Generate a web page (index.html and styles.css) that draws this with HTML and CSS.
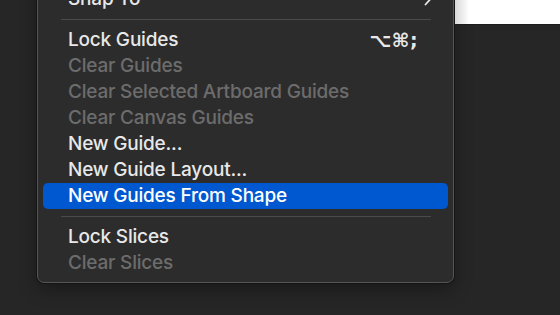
FILE: index.html
```html
<!DOCTYPE html>
<html>
<head>
<meta charset="utf-8">
<link rel="stylesheet" href="styles.css">
</head>
<body>
<div class="screen">
  <div class="menu">
    <div class="item">
      <span class="label">Snap To</span>
      <svg class="chev" width="8" height="14" viewBox="0 0 8 14"><path d="M1.5 1.5 L6.5 7 L1.5 12.5" fill="none" stroke="#e6e6e6" stroke-width="1.8" stroke-linecap="round" stroke-linejoin="round"/></svg>
    </div>
    <div class="sep"></div>
    <div class="item"><span class="label">Lock Guides</span><span class="key">⌥⌘;</span></div>
    <div class="item off"><span class="label">Clear Guides</span></div>
    <div class="item off"><span class="label">Clear Selected Artboard Guides</span></div>
    <div class="item off"><span class="label">Clear Canvas Guides</span></div>
    <div class="item"><span class="label">New Guide...</span></div>
    <div class="item"><span class="label">New Guide Layout...</span></div>
    <div class="item hi"><span class="label">New Guides From Shape</span></div>
    <div class="sep"></div>
    <div class="item"><span class="label">Lock Slices</span></div>
    <div class="item off"><span class="label">Clear Slices</span></div>
  </div>
  <div class="side">
    <div class="window"></div>
  </div>
</div>
</body>
</html>
```
FILE: styles.css
```css
html, body {
  margin: 0;
  padding: 0;
  background: #262626;
}
.screen {
  display: flex;
  width: 560px;
  height: 315px;
  overflow: hidden;
  align-items: flex-start;
}
.menu {
  box-sizing: border-box;
  margin-left: 37px;
  margin-top: -21px;
  width: 417px;
  flex: none;
  background: #2c2c2c;
  border: 1px solid #555555;
  border-radius: 7px;
  box-shadow: 0 0 0 1px #141414, 0 6px 18px rgba(0,0,0,0.35);
  padding: 6px 5px 6px 5px;
  font-family: Inter, "DejaVu Sans", sans-serif;
  font-size: 19px;
  font-weight: 500;
  letter-spacing: -0.2px;
  color: #e8e8e8;
}
.item {
  height: 26px;
  display: flex;
  align-items: center;
  justify-content: space-between;
  padding: 0 30px 0 25px;
  border-radius: 5px;
  line-height: 26px;
}
.item.off {
  color: #6c6c6c;
}
.item.hi {
  background: #0058d0;
  color: #ffffff;
}
.key {
  font-family: "DejaVu Sans", sans-serif;
  font-size: 19px;
  font-weight: 700;
  letter-spacing: 0.5px;
}
.chev {
  margin-right: -14px;
}
.sep {
  height: 1px;
  background: #4a4a4a;
  margin: 7px 17px 7px 18px;
}
.side {
  flex: 1;
  margin-left: 1px;
}
.window {
  height: 24px;
  background: linear-gradient(90deg, #d8d8d8 0px, #ffffff 14px);
  border-bottom: 1px solid #1c1c1c;
}
```
